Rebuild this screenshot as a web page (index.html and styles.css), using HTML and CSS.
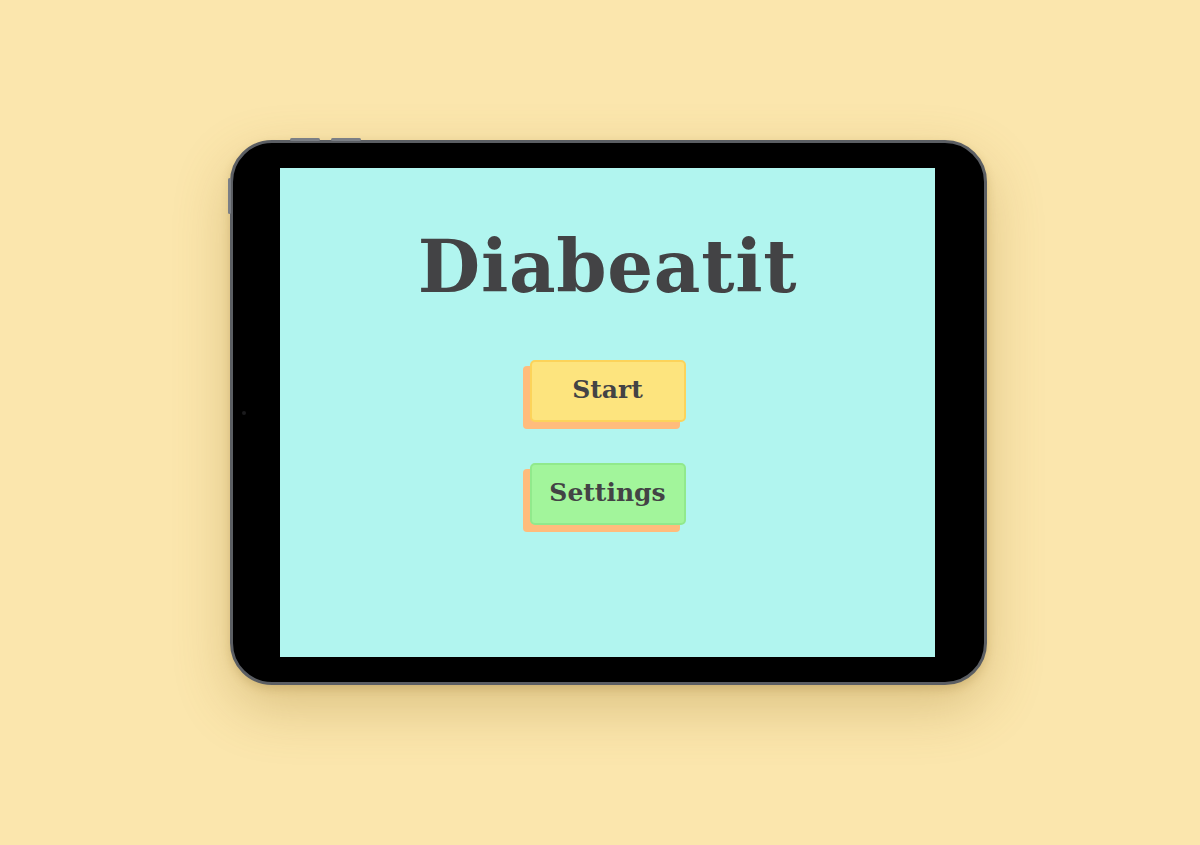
FILE: index.html
```html
<!DOCTYPE html>
<html lang="en">
<head>
<meta charset="utf-8">
<title>Diabeatit</title>
<link rel="stylesheet" href="styles.css">
</head>
<body>
<div class="stage">
  <div class="tablet">
    <span class="hw hw-top1"></span>
    <span class="hw hw-top2"></span>
    <span class="hw hw-left"></span>
    <span class="camera"></span>
    <div class="screen">
      <h1 class="title">Diabeatit</h1>
      <div class="menu">
        <button class="btn btn-start"><span class="face">Start</span></button>
        <button class="btn btn-settings"><span class="face">Settings</span></button>
      </div>
    </div>
  </div>
</div>
</body>
</html>
```
FILE: styles.css
```css
html, body {
  margin: 0;
  padding: 0;
}
body {
  background: #fbe6ad;
  width: 1200px;
  height: 845px;
  overflow: hidden;
  font-family: "DejaVu Serif", "Liberation Serif", serif;
}
.stage {
  padding: 140px 0 0 230px;
}
.tablet {
  position: relative;
  width: 655px;
  height: 489px;
  padding: 25px 49px 25px 47px;
  background: #000;
  border: 3px solid #5b5e63;
  border-radius: 42px;
  box-shadow: 0 22px 55px rgba(150, 110, 30, 0.3), 0 4px 10px rgba(120, 90, 20, 0.2);
}
.hw {
  position: absolute;
  background: #7b7f85;
  border-radius: 2px;
}
.hw-top1 { top: -5px; left: 57px; width: 30px; height: 3px; }
.hw-top2 { top: -5px; left: 98px; width: 30px; height: 3px; }
.hw-left { left: -5px; top: 35px; width: 3px; height: 36px; }
.camera {
  position: absolute;
  left: 9px;
  top: 268px;
  width: 4px;
  height: 4px;
  border-radius: 50%;
  background: #1b1b1d;
}
.screen {
  width: 655px;
  height: 489px;
  background: #b1f5ef;
  display: flex;
  flex-direction: column;
  align-items: center;
  box-sizing: border-box;
}
.title {
  margin: 57px 0 0 0;
  font-family: "DejaVu Serif", serif;
  font-weight: bold;
  font-size: 72px;
  line-height: 84px;
  color: #434345;
  letter-spacing: 0.7px;
}
.menu {
  display: flex;
  flex-direction: column;
  align-items: center;
  gap: 41px;
  margin-top: 51px;
}
.btn {
  position: relative;
  display: block;
  width: 156px;
  height: 62px;
  padding: 0;
  border: 0;
  background: transparent;
  font: inherit;
  cursor: pointer;
}
.btn::before {
  content: "";
  position: absolute;
  left: -7px;
  top: 6px;
  width: 157px;
  height: 63px;
  background: #ffbc7c;
  border-radius: 4px;
}
.face {
  position: relative;
  display: flex;
  align-items: center;
  justify-content: center;
  width: 100%;
  height: 100%;
  box-sizing: border-box;
  border-radius: 5px;
  font-family: "DejaVu Serif", serif;
  font-weight: bold;
  font-size: 25px;
  color: #434345;
  letter-spacing: 0;
  padding-bottom: 3px;
}
.btn-start .face {
  background: #fde47e;
  border: 2px solid #fcd35a;
}
.btn-settings .face {
  background: #a2f59b;
  border: 2px solid #91e98c;
}
```
